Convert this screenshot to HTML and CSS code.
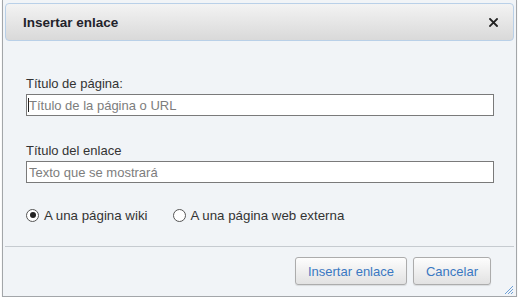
FILE: index.html
```html
<!DOCTYPE html>
<html lang="es">
  <head>
    <meta charset="UTF-8" />
    <meta name="viewport" content="width=device-width, initial-scale=1.0"/>
    <title>Insertar enlace</title>
    <link rel="stylesheet" href="styles.css">
  </head>

  <body>
    <div class="dialog">
      <div class="titlebar">
        <span class="title">Insertar enlace</span>
        <button class="close" title="Cerrar">
          <svg width="9" height="9" viewBox="0 0 9 9">
            <path d="M1 1 L8 8 M8 1 L1 8" stroke="#222" stroke-width="1.8" stroke-linecap="square" />
          </svg>
        </button>
      </div>

      <div class="content">
        <div class="field">
          <label for="page">Título de página:</label>
          <div class="input-wrap">
            <span class="caret"></span>
            <input type="text" id="page" placeholder="Título de la página o URL" />
          </div>
        </div>

        <div class="field">
          <label for="text">Título del enlace</label>
          <div class="input-wrap">
            <input type="text" id="text" placeholder="Texto que se mostrará" />
          </div>
        </div>

        <div class="radios">
          <label class="radio">
            <span class="dot checked"></span>A una página wiki
          </label>
          <label class="radio">
            <span class="dot"></span>A una página web externa
          </label>
        </div>
      </div>

      <div class="separator"></div>

      <div class="footer">
        <button class="btn">Insertar enlace</button>
        <button class="btn">Cancelar</button>
      </div>

      <svg class="grip" width="11" height="11" viewBox="0 0 11 11">
        <path d="M10 2 L2 10 M10 5 L5 10 M10 8 L8 10" stroke="#6d9fd6" stroke-width="1" />
      </svg>
    </div>
  </body>
</html>
```

FILE: styles.css
```css
body {
  margin: 0;
  background-color: #fff;
  font-family: 'Liberation Sans', Arial, sans-serif;
  font-size: 13px;
  color: #333;
}

.dialog {
  position: relative;
  box-sizing: border-box;
  width: 515px;
  height: 297px;
  margin-left: 2px;
  padding: 3px 2px 0 2px;
  background-color: #f1f4f7;
  border: 1px solid #a3a6a9;
  border-top: none;
  box-shadow: 0 1px 1px rgba(0, 0, 0, 0.15);
  display: flex;
  flex-direction: column;
}

.titlebar {
  box-sizing: border-box;
  height: 38px;
  border: 1px solid #b9d0e8;
  border-radius: 4px;
  background: linear-gradient(#f3f3f3, #d9d9d9);
  display: flex;
  align-items: center;
  justify-content: space-between;
  padding: 0 14px 0 17px;
}

.title {
  font-weight: bold;
  font-size: 13.5px;
  color: #22232b;
  padding-top: 1px;
}

.close {
  border: none;
  background: none;
  padding: 0;
  width: 12px;
  height: 12px;
  display: flex;
  align-items: center;
  justify-content: center;
  cursor: pointer;
}

.content {
  padding: 35px 20px 0 21px;
}

.field {
  margin-bottom: 27px;
}

.field label {
  display: block;
  line-height: 15px;
  margin-bottom: 3px;
}

.input-wrap {
  position: relative;
}

.field input {
  display: block;
  box-sizing: border-box;
  width: 100%;
  height: 22px;
  margin: 0;
  padding: 0 2px;
  border: 1px solid #7a7a7a;
  background-color: #fff;
  font-family: inherit;
  font-size: 13px;
  color: #333;
  outline: none;
}

.field input::placeholder {
  color: #7d7d7d;
}

.caret {
  position: absolute;
  left: 2px;
  top: 4px;
  width: 1px;
  height: 14px;
  background-color: #222;
}

.field:nth-child(2) {
  margin-bottom: 23px;
}

.radios {
  display: flex;
  gap: 25px;
  height: 18px;
  align-items: center;
  font-size: 13.3px;
}

.radio {
  display: flex;
  align-items: center;
  cursor: pointer;
}

.dot {
  box-sizing: border-box;
  width: 13px;
  height: 13px;
  border: 1px solid #555;
  border-radius: 50%;
  background-color: #fff;
  margin-right: 5px;
  position: relative;
}

.dot.checked::after {
  content: '';
  position: absolute;
  left: 2.5px;
  top: 2.5px;
  width: 6px;
  height: 6px;
  border-radius: 50%;
  background-color: #222;
}

.separator {
  margin-top: 22px;
  border-top: 1px solid #c6cbd0;
}

.footer {
  display: flex;
  justify-content: flex-end;
  gap: 6px;
  padding: 10px 23px 0 0;
}

.btn {
  box-sizing: border-box;
  height: 28px;
  padding: 0 12px;
  border: 1px solid #acacac;
  border-radius: 3px;
  background: linear-gradient(#fdfdfd, #e2e2e2);
  box-shadow: 0 1px 1px rgba(0, 0, 0, 0.1);
  font-family: inherit;
  font-size: 13px;
  color: #3a78c2;
  cursor: pointer;
}

.grip {
  position: absolute;
  right: 2px;
  bottom: 1px;
}
```
